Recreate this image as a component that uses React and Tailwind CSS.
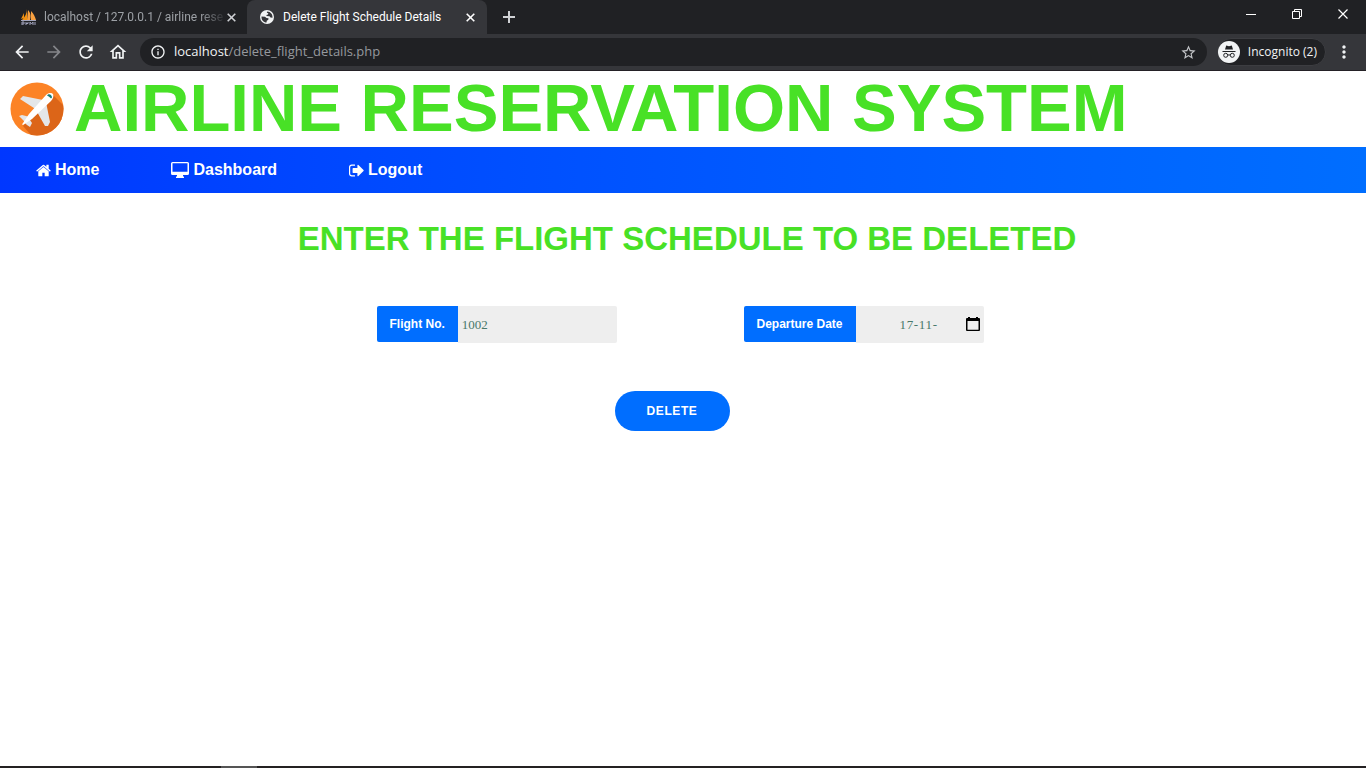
import { MdArrowBack, MdArrowForward, MdRefresh, MdOutlineHome, MdInfoOutline, MdStarBorder, MdMoreVert } from "react-icons/md";

function AdminLogo() {
  return (
    <svg width="17" height="16" viewBox="0 0 17 16" className="shrink-0" aria-hidden="true">
      <path d="M7 0C7 4 5 8 2 11h5zM1 10 4 4 4 9z" fill="#f29111" />
      <path d="M8 1c3 3 3 7 2 10H7zM11 2c3 3 4 6 5 9h-5z" fill="#f8a040" />
      <path d="M1 11.500h15M2 16v-3h2v2H2m4-2v3m0-1.500h2V13m2 3v-3l1.500 2L13 13v3m2-3v3" stroke="#a3a5bd" fill="none" />
    </svg>
  );
}

function Globe() {
  return (
    <svg width="14" height="14" viewBox="0 0 14 14" className="shrink-0" aria-hidden="true">
      <circle cx="7" cy="7" r="7" fill="#f1f3f4" />
      <path d="M1.500 6.500 5 6.700 6.500 8l2 .3-.2 1.500-1.500 1L6.500 12.600C3.500 12.300 1.300 10 1.500 6.500zM7.300 1.500l-.5 1.300 1.500.5L8 4.500 6.500 5v1l3 .3 1 1.200 2 .2C12.900 4.500 10.500 1.600 7.300 1.500z" fill="#35363a" />
    </svg>
  );
}

function Cross() {
  return <svg width="9" height="9" viewBox="0 0 9 9" className="block" aria-hidden="true"><path d="M.7.700l7.600 7.600m0-7.600L.7 8.300" stroke="currentColor" strokeWidth="1.600" /></svg>;
}

function PlaneLogo() {
  return (
    <svg width="54" height="54" viewBox="0 0 54 54" className="shrink-0" aria-hidden="true">
      <defs><clipPath id="disc"><circle cx="27" cy="27" r="26.500" /></clipPath></defs>
      <g clipPath="url(#disc)">
        <path d="M0 0h54v54H0z" fill="#fc8326" />
        <path d="M42 12 60 30v30H27L13 44z" fill="#dc6518" />
        <path d="M10 17 13 14 33 18 27 28zM36 20 40 40 38 44 35 44 26 28z" fill="#e4e6e8" />
        <path d="M9 34 12 33 20 35 16 41zM18 35 22 41 20 45 17 43 14 40z" fill="#e4e6e8" />
        <path d="M36 13C39 10 42 11 43 12c1 2 0 5-2 7L22 37 13 43C12 43 12 42 13 41L19 32z" fill="#fff" />
        <path d="M38 12.500c2-1 4 1 4 3l-1 1c-1-1-2-2-4-3z" fill="#157c78" />
      </g>
    </svg>
  );
}

function Incognito() {
  return (
    <svg width="22" height="22" viewBox="0 0 22 22" className="shrink-0" aria-hidden="true">
      <circle cx="11" cy="11" r="11" fill="#f1f3f4" />
      <path d="M7 8.500 8.200 4.500l2.800.7 2.800-.7L15 8.500zM4.500 10h13v1h-13z" fill="#202124" />
      <g fill="none" stroke="#202124"><circle cx="7.700" cy="14.300" r="2" /><circle cx="14.300" cy="14.300" r="2" /><path d="M9.700 14.200q1.300-.8 2.600 0" /></g>
    </svg>
  );
}

function HomeIcon() {
  return (
    <svg width="15" height="13" viewBox="0 220 1664 1340" aria-hidden="true">
      <path fill="currentColor" d="M1408 992v480q0 26-19 45t-45 19H960v-384H704v384H320q-26 0-45-19t-19-45V992q0-1 .5-3t.5-3l575-474 575 474q1 2 1 6zm223-69l-62 74q-8 9-21 11h-3q-13 0-21-7L832 424l-692 577q-12 8-24 7-13-2-21-11l-62-74q-8-10-7-23.500t11-21.500l719-599q32-26 76-26t76 26l244 204V288q0-14 9-23t23-9h192q14 0 23 9t9 23v408l219 182q10 8 11 21.500t-7 23.500z" />
    </svg>
  );
}

function Monitor() {
  return (
    <svg width="18" height="16" viewBox="0 0 18 16" aria-hidden="true">
      <path fill="currentColor" fillRule="evenodd" d="M1.500 0h15Q18 0 18 1.500v10q0 1.500-1.500 1.500H12v1.500h1V16H5v-1.500h1V13H1.500Q0 13 0 11.500v-10Q0 0 1.500 0zM1.500 1.300v8.400h15V1.300z" />
    </svg>
  );
}

function LogoutIcon() {
  return (
    <svg width="15" height="13" viewBox="0 230 1600 1330" aria-hidden="true">
      <path fill="currentColor" d="M640 1440q0 4 1 20t.5 26.500-3 23.500-10 19.500-20.500 6.500H288q-119 0-203.500-84.500T0 1248V544q0-119 84.500-203.500T288 256h320q13 0 22.500 9.500T640 288q0 4 1 20t.5 26.500-3 23.500-10 19.500-20.500 6.500H288q-66 0-113 47t-47 113v704q0 66 47 113t113 47h312l11.500 1 11.500 3 8 5.500 7 9 2 13.500zm928-544q0 26-19 45l-544 544q-19 19-45 19t-45-19-19-45v-288H448q-26 0-45-19t-19-45V704q0-26 19-45t45-19h448V352q0-26 19-45t45-19 45 19l544 544q19 19 19 45z" />
    </svg>
  );
}

function CalendarIcon() {
  return (
    <svg width="14" height="15" viewBox="0 0 14 15" aria-hidden="true">
      <path fillRule="evenodd" d="M2 0h2v1h6V0h2v1h1q1 0 1 1v11q0 1-1 1H1q-1 0-1-1V2q0-1 1-1h1zM1.500 4v8.700h11V4z" />
    </svg>
  );
}

function Browser() {
  return (
    <header className="bg-[#202124] font-['Open_Sans','Noto_Sans',sans-serif] text-xs text-white">
      <div className="flex h-[34px]">
        <div className="flex w-[247px] items-center rounded-br-lg pl-5 pr-[11px] font-[Roboto,sans-serif] text-[#9da1a6]">
          <AdminLogo />
          <span className="ml-[7px] flex-1 whitespace-nowrap [mask-image:linear-gradient(to_right,#000_85%,transparent)]">localhost / 127.0.0.1 / airline rese</span>
          <button aria-label="Close first tab" className="text-[#d0d2d5]"><Cross /></button>
        </div>
        <div className="flex w-60 items-center rounded-t-lg bg-[#35363a] pl-[13px] pr-3 font-[Roboto,sans-serif]">
          <Globe />
          <span className="ml-[9px] flex-1 whitespace-nowrap">Delete Flight Schedule Details</span>
          <button aria-label="Close tab"><Cross /></button>
        </div>
        <button aria-label="New tab" className="ml-4 text-[#d0d2d5]"><svg width="12" height="12" className="block"><path d="M6 0v12M0 6h12" stroke="currentColor" strokeWidth="2" /></svg></button>
        <div className="ml-auto flex h-7 items-center gap-9 pr-[18px]">
          <button aria-label="Minimize"><svg width="10" height="10" className="block"><path d="M0 5.500h10" stroke="#fff" /></svg></button>
          <button aria-label="Restore"><svg width="10" height="10" className="block"><path d="M2.500 2.500v-2h7v7h-2M.5 2.500h7v7h-7z" fill="none" stroke="#fff" /></svg></button>
          <button aria-label="Close window"><svg width="10" height="10" className="block"><path d="M.5.500l9 9m0-9l-9 9" stroke="#fff" strokeWidth="1.200" /></svg></button>
        </div>
      </div>
      <div className="flex h-[37px] items-center border-b border-[#242126] bg-[#35363a] px-3 text-[#f1f3f4]">
        <div className="flex w-32 gap-3">
          <button aria-label="Back"><MdArrowBack size="20" /></button>
          <button aria-label="Forward" className="text-[#85868a]"><MdArrowForward size="20" /></button>
          <button aria-label="Reload"><MdRefresh size="20" /></button>
          <button aria-label="Home page"><MdOutlineHome size="20" /></button>
        </div>
        <div className="flex h-7 flex-1 items-center rounded-full bg-[#202124] px-2.5">
          <MdInfoOutline size="16" />
          <span className="ml-2 flex-1 text-[13px]">localhost<span className="text-[#96999e]">/delete_flight_details.php</span></span>
          <button aria-label="Bookmark" className="text-[#c4c6c9]"><MdStarBorder size="17" /></button>
        </div>
        <button className="ml-2.5 flex h-7 items-center gap-2 rounded-full border border-[#3c3d41] bg-[#202124] pr-2 whitespace-nowrap"><Incognito />Incognito (2)</button>
        <button aria-label="Browser menu" className="ml-2"><MdMoreVert size="20" /></button>
      </div>
    </header>
  );
}

export default function App() {
  return (
    <div className="flex min-h-screen flex-col bg-white font-['Liberation_Sans',Arial,sans-serif]">
      <Browser />
      <main className="flex-1">
        <div className="flex h-19 items-center gap-2.5 pl-2.5">
          <PlaneLogo />
          <h1 className="pb-1 whitespace-nowrap text-[67px] leading-none font-bold text-[#48e126]">AIRLINE RESERVATION SYSTEM</h1>
        </div>
        <nav className="flex h-[46px] items-center gap-[72px] bg-linear-to-r from-[#0037ff] to-[#006eff] px-9 font-bold text-white">
          <a href="#home" className="flex items-center gap-1"><HomeIcon />Home</a>
          <a href="#dashboard" className="flex items-center gap-1"><Monitor />Dashboard</a>
          <a href="#logout" className="flex items-center gap-1"><LogoutIcon />Logout</a>
        </nav>
        <form className="flex flex-col items-center">
          <h2 className="mt-6 ml-2 text-[33px] leading-11 font-bold text-[#48e126]">ENTER THE FLIGHT SCHEDULE TO BE DELETED</h2>
          <div className="mt-[45px] mr-1.5 flex gap-[127px]">
            <div className="flex w-60 items-start">
              <label htmlFor="flight" className="h-9 rounded-l-xs bg-[#006eff] px-[13px] text-xs leading-9 font-bold whitespace-nowrap text-white">Flight No.</label>
              <input id="flight" defaultValue="1002" className="h-[37px] min-w-0 flex-1 rounded-r-xs bg-[#eee] px-1 font-['Liberation_Serif',serif] text-[13px] text-[#49796b] outline-none" />
            </div>
            <div className="flex w-60 items-start">
              <label htmlFor="date" className="h-9 rounded-l-xs bg-[#006eff] px-[13px] text-xs leading-9 font-bold whitespace-nowrap text-white">Departure Date</label>
              <div className="flex h-[37px] min-w-0 flex-1 items-center rounded-r-xs bg-[#eee] pr-1">
                <input id="date" defaultValue="17-11-" className="h-full min-w-0 flex-1 pl-11 font-['Liberation_Serif',serif] text-[13px] tracking-wider text-[#49796b] outline-none" />
                <button type="button" aria-label="Choose date"><CalendarIcon /></button>
              </div>
            </div>
          </div>
          <button type="button" className="mt-12 mr-[22px] h-10 w-[115px] rounded-full bg-[#006eff] text-xs font-bold tracking-wider text-white">DELETE</button>
        </form>
      </main>
      <footer className="flex h-0.5 bg-[#242122]"><div className="ml-[221px] w-9 bg-[#555]" /></footer>
    </div>
  );
}
